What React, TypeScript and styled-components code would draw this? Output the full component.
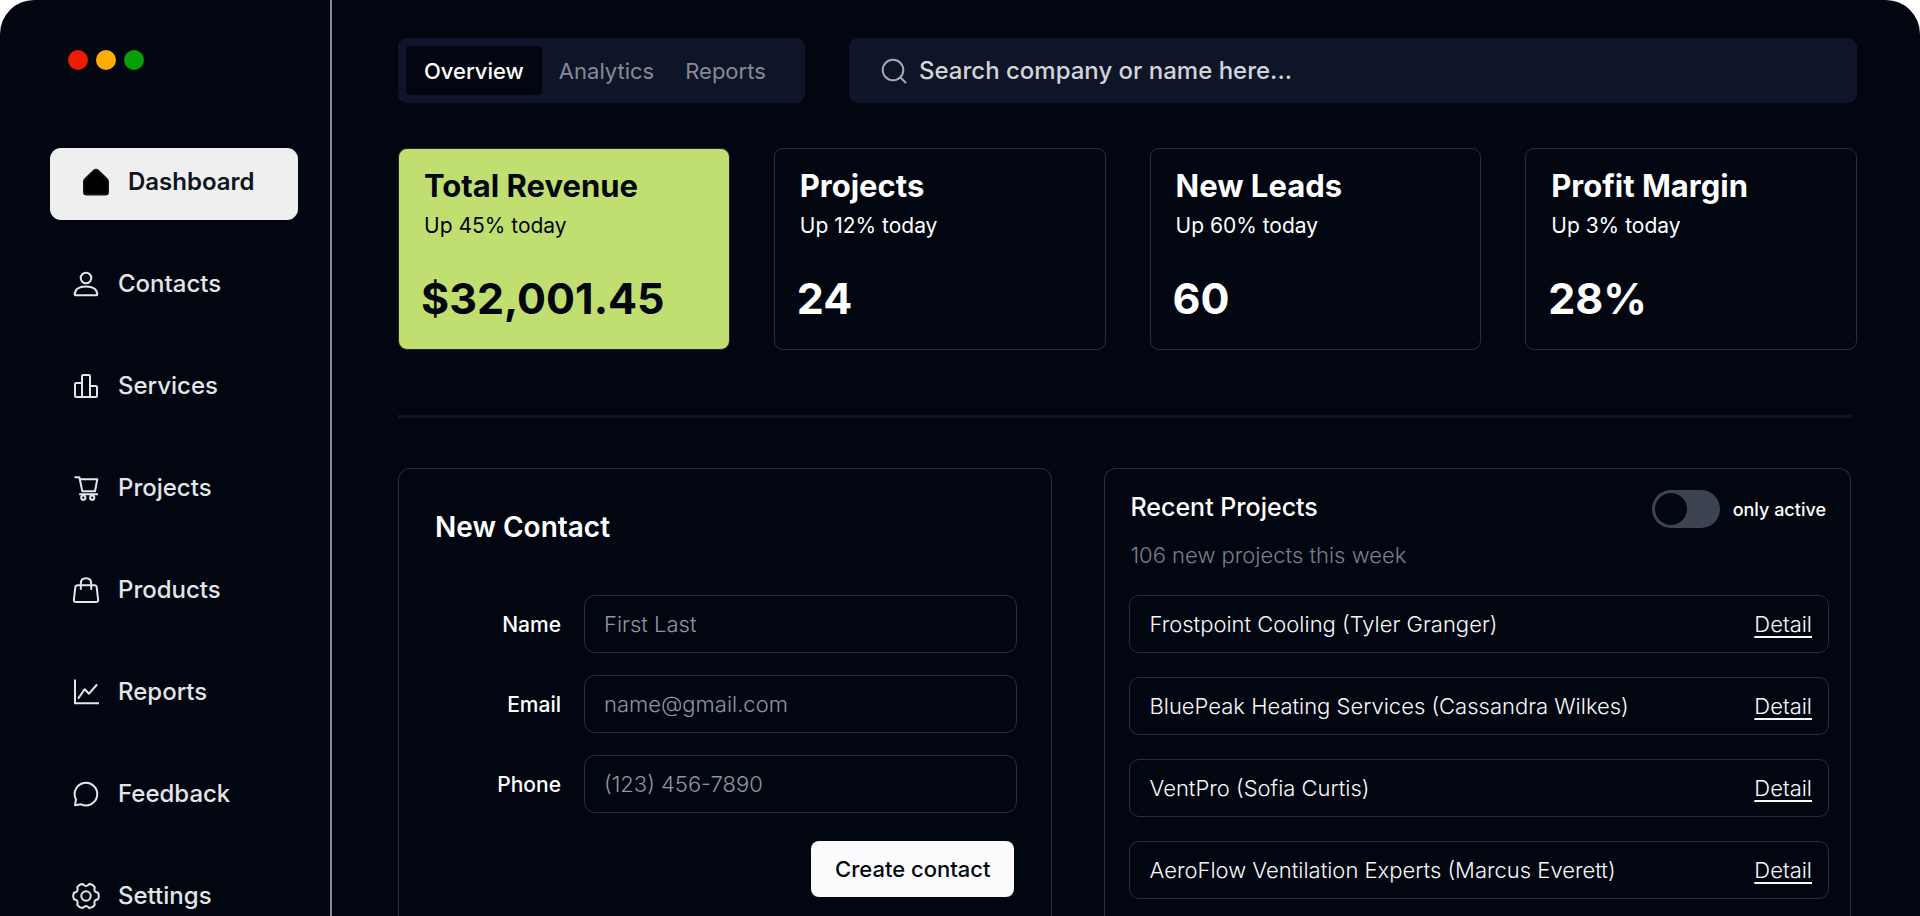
import React from "react";
import styled, { createGlobalStyle } from "styled-components";

const color = {
  bg: "#020610",
  surface: "#0f1528",
  border: "#252e41",
  rail: "#858b96",
  text: "#ffffff",
  soft: "#e3e5e9",
  muted: "#868a94",
  lime: "#c1de71",
};

const GlobalStyle = createGlobalStyle`
  *, *::before, *::after { box-sizing: border-box; }
  body {
    margin: 0;
    background: #ffffff;
    font-family: Inter, "Liberation Sans", sans-serif;
    color: ${color.text};
  }
  button, input { font: inherit; }
  h1, h2, p, ul { margin: 0; padding: 0; }
  ul { list-style: none; }
`;

const Window = styled.div`
  display: flex;
  height: 100vh;
  overflow: hidden;
  background: ${color.bg};
  border-radius: 34px 34px 0 0;
`;

/* ---------- Sidebar ---------- */

const Sidebar = styled.aside`
  flex: 0 0 332px;
  padding: 50px 32px 0 50px;
  border-right: 2px solid ${color.rail};
  overflow-y: auto;
  scrollbar-width: none;
`;

const WindowDots = styled.div`
  display: flex;
  gap: 8px;
  padding-left: 18px;
  margin-bottom: 78px;
`;

const Dot = styled.span<{ $color: string }>`
  width: 20px;
  height: 20px;
  border-radius: 50%;
  background: ${(p) => p.$color};
`;

const NavList = styled.ul`
  display: flex;
  flex-direction: column;
  gap: 30px;
`;

const NavLink = styled.a<{ $active?: boolean }>`
  display: flex;
  align-items: center;
  gap: 18px;
  height: 72px;
  padding: 0 20px 4px ${(p) => (p.$active ? 32 : 22)}px;
  border-radius: 11px;
  font-size: 24px;
  line-height: 32px;
  font-weight: ${(p) => (p.$active ? 600 : 500)};
  text-decoration: none;
  color: ${(p) => (p.$active ? "#0d1422" : color.soft)};
  background: ${(p) => (p.$active ? "#efefef" : "transparent")};
`;

const Glyph = styled.svg`
  flex: none;
  width: 28px;
  height: 28px;
  fill: none;
  stroke: currentColor;
  stroke-width: 2;
  stroke-linecap: round;
  stroke-linejoin: round;
`;

/* ---------- Main column ---------- */

const Main = styled.main`
  flex: 1;
  min-width: 0;
  display: flex;
  flex-direction: column;
  padding: 38px 63px 0 66px;
`;

const Toolbar = styled.div`
  display: flex;
  gap: 44px;
  margin-bottom: 45px;
`;

const Tabs = styled.div`
  display: flex;
  gap: 3px;
  flex: 0 0 407px;
  height: 65px;
  padding: 8px;
  border-radius: 9px;
  background: ${color.surface};
`;

const Tab = styled.button<{ $active?: boolean }>`
  padding: 0 ${(p) => (p.$active ? 18 : 14)}px;
  border: 0;
  border-radius: 4px;
  font-size: 22px;
  font-weight: ${(p) => (p.$active ? 500 : 400)};
  color: ${(p) => (p.$active ? color.text : color.muted)};
  background: ${(p) => (p.$active ? color.bg : "transparent")};
`;

const SearchBox = styled.label`
  flex: 1;
  display: flex;
  align-items: center;
  gap: 11px;
  height: 65px;
  padding: 0 31px;
  border-radius: 9px;
  color: #a6a8ad;
  background: ${color.surface};
`;

const SearchInput = styled.input`
  flex: 1;
  min-width: 0;
  padding: 0;
  border: 0;
  outline: 0;
  font-size: 24px;
  font-weight: 450;
  color: ${color.text};
  background: transparent;
  &::placeholder { color: #d3d4d8; opacity: 1; }
`;

const Stats = styled.section`
  display: grid;
  grid-template-columns: repeat(4, 1fr);
  gap: 44px;
`;

const StatCard = styled.article<{ $accent?: boolean }>`
  height: 202px;
  padding: 18px 24px 0 25px;
  border: 1px solid ${(p) => (p.$accent ? "#1a2436" : color.border)};
  border-radius: 9px;
  color: ${(p) => (p.$accent ? color.bg : color.text)};
  background: ${(p) => (p.$accent ? color.lime : "transparent")};
`;

const StatTitle = styled.h2`
  font-size: 31px;
  line-height: 38px;
  font-weight: 700;
`;

const StatNote = styled.p`
  margin-top: 7px;
  font-size: 21px;
  line-height: 28px;
`;

const StatValue = styled.p`
  margin: 32px 0 0 -3px;
  font-size: 43px;
  line-height: 52px;
  font-weight: 700;
`;

const Divider = styled.hr`
  width: calc(100% - 5px);
  height: 3px;
  margin: 65px 0 50px;
  border: 0;
  flex: none;
  background: ${color.surface};
`;

const Panels = styled.div`
  flex: 1;
  min-height: 0;
  display: grid;
  grid-template-columns: 654fr 746fr;
  gap: 52px;
  margin-right: 6px;
`;

const Panel = styled.section`
  border: 1px solid ${color.border};
  border-bottom: 0;
  border-radius: 12px 12px 0 0;
  overflow: hidden;
`;

/* ---------- New contact ---------- */

const ContactForm = styled.form`
  padding: 40px 34px 0 36px;
`;

const FormTitle = styled.h2`
  margin-bottom: 50px;
  font-size: 28px;
  line-height: 36px;
  font-weight: 600;
`;

const Field = styled.div`
  display: grid;
  grid-template-columns: 126px 1fr;
  column-gap: 23px;
  align-items: center;
  margin-bottom: 22px;
`;

const FieldLabel = styled.label`
  font-size: 21px;
  font-weight: 500;
  text-align: right;
`;

const FieldInput = styled.input`
  width: 100%;
  height: 58px;
  padding: 0 19px;
  border: 1px solid ${color.border};
  border-radius: 11px;
  outline: 0;
  font-size: 22px;
  font-weight: 350;
  color: ${color.text};
  background: transparent;
  &::placeholder { color: #90959f; opacity: 1; }
`;

const CreateButton = styled.button`
  display: block;
  height: 56px;
  margin: 28px 3px 0 auto;
  padding: 0 24px;
  border: 0;
  border-radius: 8px;
  font-size: 22px;
  font-weight: 500;
  color: ${color.bg};
  background: #fbfbfd;
`;

/* ---------- Recent projects ---------- */

const ProjectsBody = styled.div`
  padding: 21px 21px 0 24px;
`;

const ProjectsHead = styled.header`
  display: flex;
  justify-content: space-between;
  align-items: center;
  height: 38px;
`;

const ProjectsTitle = styled.h2`
  padding: 0 0 4px 1px;
  font-size: 25px;
  line-height: 32px;
  font-weight: 500;
`;

const SwitchLabel = styled.label`
  display: flex;
  align-items: center;
  gap: 13px;
  padding-right: 3px;
  font-size: 18px;
  font-weight: 500;
`;

const Switch = styled.input`
  appearance: none;
  width: 68px;
  height: 38px;
  margin: 0;
  padding: 3px;
  border-radius: 19px;
  background: #3d4451;
  &::before {
    content: "";
    display: block;
    width: 32px;
    height: 32px;
    border-radius: 50%;
    background: ${color.bg};
  }
  &:checked::before { margin-left: auto; }
`;

const ProjectsNote = styled.p`
  margin: 13px 0 26px 1px;
  font-size: 22px;
  line-height: 28px;
  font-weight: 350;
  color: #7a7f8a;
`;

const ProjectList = styled.ul`
  display: flex;
  flex-direction: column;
  gap: 24px;
`;

const ProjectRow = styled.li`
  display: flex;
  justify-content: space-between;
  align-items: center;
  flex: none;
  height: 58px;
  padding: 0 16px 0 19px;
  border: 1px solid ${color.border};
  border-radius: 10px;
  font-size: 22px;
  font-weight: 350;
  color: #f8f9fa;
`;

const DetailLink = styled.a`
  color: inherit;
  text-decoration: underline;
  text-decoration-thickness: 2px;
  text-underline-offset: 4px;
  text-decoration-skip-ink: none;
`;

/* ---------- Data ---------- */

/* Outline of a six-toothed gear centred in the 28px icon box. */
const gearPath = (() => {
  const at = (radius: number, degrees: number) => {
    const a = (degrees * Math.PI) / 180;
    return `${(14 + radius * Math.cos(a)).toFixed(2)} ${(14 + radius * Math.sin(a)).toFixed(2)}`;
  };
  return (
    [0, 60, 120, 180, 240, 300]
      .map((t, i) => `${i ? "L" : "M"}${at(12.4, t - 15)}Q${at(13.6, t)} ${at(12.4, t + 15)}L${at(10.6, t + 22)}Q${at(9.6, t + 30)} ${at(10.6, t + 38)}`)
      .join("") + "Z"
  );
})();

const navItems = [
  {
    name: "Dashboard",
    icon: (
      <path
        fill="#000"
        d="M3 11.2 11.8 2.6q2.2-1.8 4.4 0L25 11.2q1 1 1 2.4V24q0 2.6-2.6 2.6H4.6Q2 26.6 2 24V13.6Q2 12.2 3 11.2Z"
      />
    ),
  },
  {
    name: "Contacts",
    icon: (
      <>
        <circle cx="14" cy="8" r="5.3" />
        <path d="M2.7 24.5C2.7 19.6 7 16.4 14 16.4S25.3 19.6 25.3 24.5Q25.3 25.3 24.5 25.3H3.5Q2.7 25.3 2.7 24.5Z" />
      </>
    ),
  },
  {
    name: "Services",
    icon: (
      <path d="M10 25V4.2Q10 3 11.2 3H16.8Q18 3 18 4.2V25M10 11H4.2Q3 11 3 12.2V23.8Q3 25 4.2 25H23.8Q25 25 25 23.8V15.2Q25 14 23.8 14H18" />
    ),
  },
  {
    name: "Projects",
    icon: (
      <>
        <path strokeLinecap="butt" d="M2.5 3.2H7.4L10.3 17.3H23L25.3 5.2H8M7.2 20.2H26" />
        <circle cx="11.3" cy="23.7" r="2.1" />
        <circle cx="20.2" cy="23.7" r="2.1" />
      </>
    ),
  },
  {
    name: "Products",
    icon: (
      <>
        <path d="M5.6 9.2H22.4Q24.4 9.2 24.7 11.2L26.1 23.6Q26.4 26 24 26H4Q1.6 26 1.9 23.6L3.3 11.2Q3.6 9.2 5.6 9.2Z" />
        <path d="M8.8 13V7.6Q8.8 2.2 14 2.2T19.2 7.6V13" />
      </>
    ),
  },
  {
    name: "Reports",
    icon: (
      <>
        <path strokeLinecap="butt" strokeLinejoin="miter" d="M3 1.5V25.3H27" />
        <path d="M6.6 20 12.6 11.2 17 15.7 24.6 7" />
      </>
    ),
  },
  {
    name: "Feedback",
    icon: <path d="M3 25.2 4 19.5A11.3 11.3 0 1 1 9 24.3Z" />,
  },
  {
    name: "Settings",
    icon: (
      <>
        <circle cx="14" cy="14" r="4.7" />
        <path d={gearPath} />
      </>
    ),
  },
];

const stats = [
  { title: "Total Revenue", note: "Up 45% today", value: "$32,001.45", accent: true },
  { title: "Projects", note: "Up 12% today", value: "24" },
  { title: "New Leads", note: "Up 60% today", value: "60" },
  { title: "Profit Margin", note: "Up 3% today", value: "28%" },
];

const fields = [
  { id: "name", label: "Name", type: "text", placeholder: "First Last" },
  { id: "email", label: "Email", type: "email", placeholder: "name@gmail.com" },
  { id: "phone", label: "Phone", type: "tel", placeholder: "(123) 456-7890" },
];

const projects = [
  "Frostpoint Cooling (Tyler Granger)",
  "BluePeak Heating Services (Cassandra Wilkes)",
  "VentPro (Sofia Curtis)",
  "AeroFlow Ventilation Experts (Marcus Everett)",
];

export default function App() {
  return (
    <>
      <GlobalStyle />
      <Window>
        <Sidebar>
          <WindowDots>
            <Dot $color="#ec1c00" />
            <Dot $color="#ffae00" />
            <Dot $color="#069f06" />
          </WindowDots>
          <nav>
            <NavList>
              {navItems.map((item, i) => (
                <li key={item.name}>
                  <NavLink href="#" $active={i === 0}>
                    <Glyph viewBox="0 0 28 28" aria-hidden="true">
                      {item.icon}
                    </Glyph>
                    {item.name}
                  </NavLink>
                </li>
              ))}
            </NavList>
          </nav>
        </Sidebar>

        <Main>
          <Toolbar>
            <Tabs>
              <Tab type="button" $active>Overview</Tab>
              <Tab type="button">Analytics</Tab>
              <Tab type="button">Reports</Tab>
            </Tabs>
            <SearchBox>
              <Glyph viewBox="0 0 28 28" aria-hidden="true">
                <circle cx="13" cy="13" r="10.3" />
                <path d="M20.5 20.5 25.5 25.5" />
              </Glyph>
              <SearchInput type="search" aria-label="Search" placeholder="Search company or name here..." />
            </SearchBox>
          </Toolbar>

          <Stats>
            {stats.map((s) => (
              <StatCard key={s.title} $accent={s.accent}>
                <StatTitle>{s.title}</StatTitle>
                <StatNote>{s.note}</StatNote>
                <StatValue>{s.value}</StatValue>
              </StatCard>
            ))}
          </Stats>

          <Divider />

          <Panels>
            <Panel>
              <ContactForm>
                <FormTitle>New Contact</FormTitle>
                {fields.map((f) => (
                  <Field key={f.id}>
                    <FieldLabel htmlFor={f.id}>{f.label}</FieldLabel>
                    <FieldInput id={f.id} type={f.type} placeholder={f.placeholder} />
                  </Field>
                ))}
                <CreateButton type="button">Create contact</CreateButton>
              </ContactForm>
            </Panel>

            <Panel>
              <ProjectsBody>
                <ProjectsHead>
                  <ProjectsTitle>Recent Projects</ProjectsTitle>
                  <SwitchLabel>
                    <Switch type="checkbox" role="switch" />
                    only active
                  </SwitchLabel>
                </ProjectsHead>
                <ProjectsNote>106 new projects this week</ProjectsNote>
                <ProjectList>
                  {projects.map((name) => (
                    <ProjectRow key={name}>
                      <span>{name}</span>
                      <DetailLink href="#">Detail</DetailLink>
                    </ProjectRow>
                  ))}
                </ProjectList>
              </ProjectsBody>
            </Panel>
          </Panels>
        </Main>
      </Window>
    </>
  );
}
